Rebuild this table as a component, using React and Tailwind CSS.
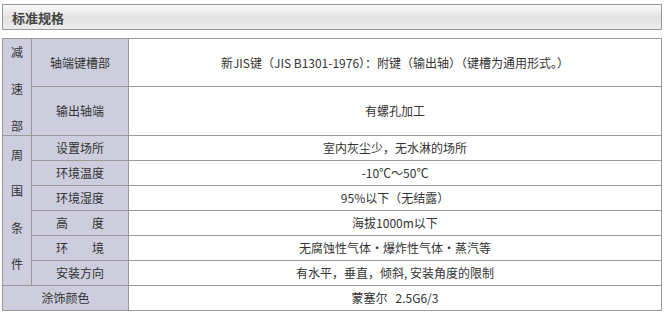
const ROWS = [
  { label: '设置场所', value: '室内灰尘少，无水淋的场所' },
  { label: '环境温度', value: '-10℃～50℃' },
  { label: '环境湿度', value: '95%以下（无结露）' },
  { label: '高　　度', value: '海拔1000m以下' },
  { label: '环　　境', value: '无腐蚀性气体・爆炸性气体・蒸汽等' },
  { label: '安装方向', value: '有水平，垂直，倾斜, 安装角度的限制' },
]

const font = { fontFamily: '"Noto Sans CJK SC", "Liberation Sans", sans-serif' }

export default function App() {
  return (
    <div className="w-[668px] h-[314px] bg-white text-[12px] text-[#333]" style={font}>
      <div className="pt-[4px] pl-[2px] w-[662px]">
        {/* Section header */}
        <div className="h-[26px] border border-[#999] bg-gradient-to-b from-[#fbfbfb] via-[#e2e2e2] to-[#ececec] flex items-center pl-[9px]">
          <span className="font-bold text-[13px] text-[#444] leading-none">标准规格</span>
        </div>

        {/* Spec table */}
        <div className="mt-[8px] grid grid-cols-[28px_96px_532px] grid-rows-[47px_48px_24px_24px_24px_24px_24px_24px_24px] gap-px p-px bg-[#999] w-[660px]">
          <div className="row-span-2 bg-[#cdcdde] flex flex-col items-center justify-between pt-[7px] pb-[3px] leading-none">
            <span>减</span>
            <span>速</span>
            <span>部</span>
          </div>
          <div className="bg-[#cdcdde] flex items-center justify-center">轴端键槽部</div>
          <div className="bg-white flex items-center justify-center">
            新JIS键（JIS B1301-1976）：附键（输出轴）（键槽为通用形式。）
          </div>
          <div className="bg-[#cdcdde] flex items-center justify-center pb-[1px]">输出轴端</div>
          <div className="bg-white flex items-center justify-center">有螺孔加工</div>

          <div className="row-span-6 bg-[#cdcdde] flex flex-col items-center justify-between pt-[13px] pb-[15px] leading-none">
            <span>周</span>
            <span>围</span>
            <span>条</span>
            <span>件</span>
          </div>
          {ROWS.map(r => (
            <div key={r.label} className="contents">
              <div className="bg-[#cdcdde] flex items-center justify-center whitespace-pre">{r.label}</div>
              <div className="bg-white flex items-center justify-center">{r.value}</div>
            </div>
          ))}

          <div className="col-span-2 bg-[#cdcdde] flex items-center justify-center">涂饰颜色</div>
          <div className="bg-white flex items-center justify-center">
            蒙塞尔<span className="ml-[8px]">2.5G6/3</span>
          </div>
        </div>
      </div>
    </div>
  )
}
